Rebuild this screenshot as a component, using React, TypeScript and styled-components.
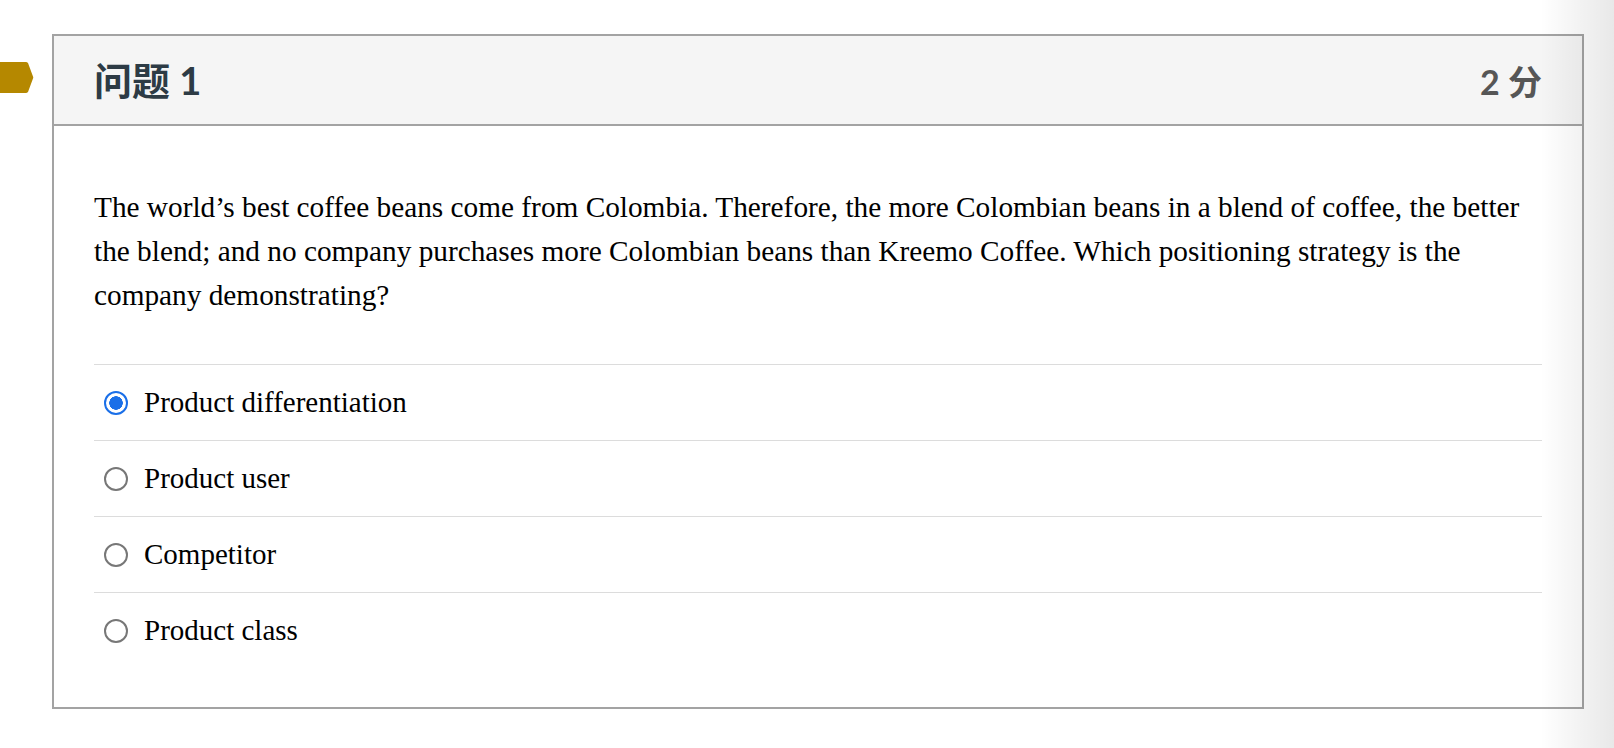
import styled, { createGlobalStyle } from 'styled-components';

const GlobalStyle = createGlobalStyle`
  html, body {
    margin: 0;
    padding: 0;
    background: #ffffff;
  }
  body {
    font-family: "Liberation Serif", "Times New Roman", serif;
  }
`;

const options = [
  { id: 'a', label: 'Product differentiation', checked: true },
  { id: 'b', label: 'Product user', checked: false },
  { id: 'c', label: 'Competitor', checked: false },
  { id: 'd', label: 'Product class', checked: false }
];

export default function App() {
  return (
    <>
      <GlobalStyle />
      <Page>
        <Card>
          <Marker viewBox='0 0 34 33' aria-hidden>
            <path d='M-4 1 H26 Q27 1 28 2 L33 15.5 Q33.5 16.5 33 17.5 L28 31 Q27 32 26 32 H-4 Z' fill='#b58800' />
          </Marker>
          <Header>
            <Title>问题 1</Title>
            <Points>2 分</Points>
          </Header>
          <Body>
            <QuestionText>
              The world’s best coffee beans come from Colombia. Therefore, the
              more Colombian beans in a blend of coffee, the better the blend;
              and no company purchases more Colombian beans than Kreemo Coffee.
              Which positioning strategy is the company demonstrating?
            </QuestionText>
            <AnswerList>
              {options.map((opt) => (
                <AnswerRow key={opt.id}>
                  <Radio $checked={opt.checked} />
                  <AnswerLabel>{opt.label}</AnswerLabel>
                </AnswerRow>
              ))}
            </AnswerList>
          </Body>
        </Card>
        <EdgeShade />
      </Page>
    </>
  );
}

const Page = styled.div`
  position: relative;
  min-height: 748px;
  box-sizing: border-box;
  padding: 34px 30px 0 52px;
`;

const Card = styled.div`
  position: relative;
  width: 1532px;
  box-sizing: border-box;
  border: 2px solid #a3a3a3;
  background: #ffffff;
`;

const Marker = styled.svg`
  position: absolute;
  left: -54px;
  top: 25px;
  width: 34px;
  height: 33px;
`;

const Header = styled.div`
  display: flex;
  align-items: center;
  justify-content: space-between;
  height: 88px;
  padding: 0 40px 0 40px;
  background: #f5f5f5;
  border-bottom: 2px solid #a3a3a3;
  font-family: Lato, "Noto Sans CJK SC", sans-serif;
  font-weight: 700;
`;

const Title = styled.div`
  color: #2d3b45;
  font-size: 38px;
  margin-top: -3px;
`;

const Points = styled.div`
  color: #565656;
  font-size: 34px;
`;

const Body = styled.div`
  padding: 59px 40px 39px;
`;

const QuestionText = styled.p`
  margin: 0 0 47px;
  font-size: 29.3px;
  line-height: 44px;
  color: #000000;
`;

const AnswerList = styled.div`
  display: flex;
  flex-direction: column;
`;

const AnswerRow = styled.div`
  display: flex;
  align-items: center;
  height: 76px;
  box-sizing: border-box;
  padding-left: 10px;
  border-top: 1px solid #dcdcdc;
`;

const Radio = styled.span<{ $checked: boolean }>`
  flex: none;
  width: 24px;
  height: 24px;
  box-sizing: border-box;
  border-radius: 50%;
  border: 2px solid ${(p) => (p.$checked ? '#1a6fe8' : '#777777')};
  background: ${(p) =>
    p.$checked
      ? 'radial-gradient(circle, #1a6fe8 0 6.5px, #ffffff 7px)'
      : '#ffffff'};
  margin-right: 16px;
`;

const AnswerLabel = styled.span`
  font-size: 29px;
  color: #000000;
`;

const EdgeShade = styled.div`
  position: absolute;
  top: 0;
  right: 0;
  width: 74px;
  height: 748px;
  background: linear-gradient(to right, rgba(0, 0, 0, 0), rgba(0, 0, 0, 0.09));
  pointer-events: none;
`;
